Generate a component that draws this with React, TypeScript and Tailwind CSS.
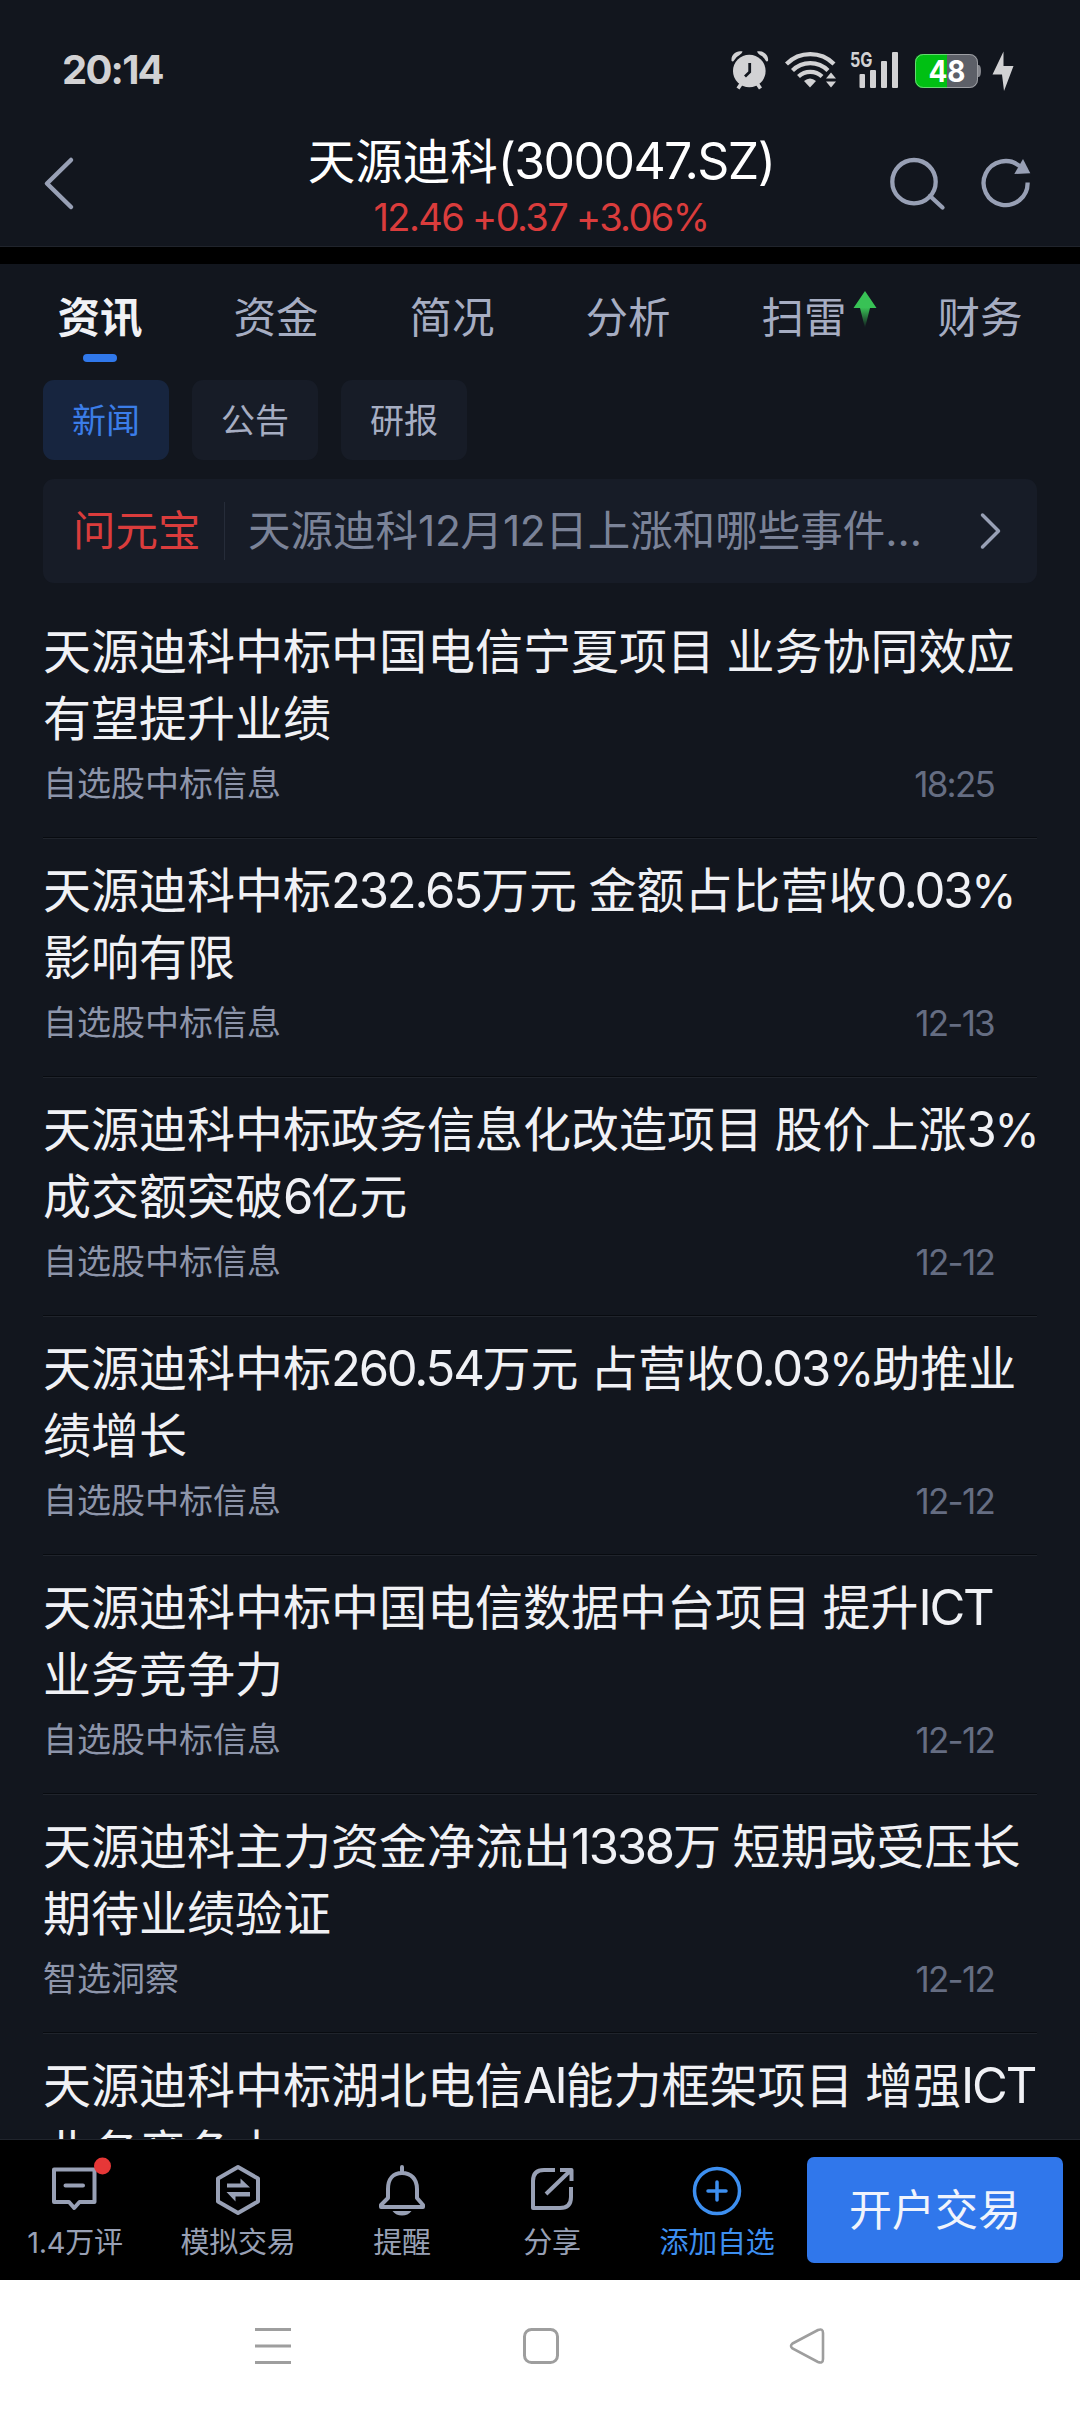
import { clsx } from "clsx";
import type { ReactNode } from "react";

type NewsItem = { lines: [ReactNode, ReactNode]; source?: string; time?: string };

/** Latin runs sit slightly larger than the Han glyphs around them. */
function L({ children }: { children: ReactNode }) {
  return <span className="text-[49px] leading-none tracking-[-0.045em]">{children}</span>;
}

/** Percent sign, set a touch smaller than the digits before it. */
function Pct() {
  return <span className="text-[46px] leading-none tracking-[-0.045em]">%</span>;
}

const NEWS: NewsItem[] = [
  {
    lines: ["天源迪科中标中国电信宁夏项目 业务协同效应", "有望提升业绩"],
    source: "自选股中标信息",
    time: "18:25",
  },
  {
    lines: [<>天源迪科中标<L>232.65</L>万元 金额占比营收<L>0.03</L><Pct /></>, "影响有限"],
    source: "自选股中标信息",
    time: "12-13",
  },
  {
    lines: [<>天源迪科中标政务信息化改造项目 股价上涨<L>3</L><Pct /></>, <>成交额突破<L>6</L>亿元</>],
    source: "自选股中标信息",
    time: "12-12",
  },
  {
    lines: [<>天源迪科中标<L>260.54</L>万元 占营收<L>0.03</L><Pct />助推业</>, "绩增长"],
    source: "自选股中标信息",
    time: "12-12",
  },
  {
    lines: [<>天源迪科中标中国电信数据中台项目 提升<L>ICT</L></>, "业务竞争力"],
    source: "自选股中标信息",
    time: "12-12",
  },
  {
    lines: [<>天源迪科主力资金净流出<L>1338</L>万 短期或受压长</>, "期待业绩验证"],
    source: "智选洞察",
    time: "12-12",
  },
  {
    lines: [<>天源迪科中标湖北电信<L>AI</L>能力框架项目 增强<L>ICT</L></>, "业务竞争力"],
  },
];

const TABS = ["资讯", "资金", "简况", "分析", "扫雷", "财务"];
const CHIPS = ["新闻", "公告", "研报"];

function StatusBar() {
  return (
    <div className="flex h-[140px] items-start justify-between pl-[62px] pr-[66px] pt-[45px] text-[#d2d2d4]">
      <span className="text-[40px] font-bold leading-[49px] tracking-[-0.045em]">20:14</span>
      <svg width="284" height="48" viewBox="730 45 284 48" fill="currentColor">
        {/* alarm */}
        <circle cx="749.3" cy="71" r="16.300" />
        <path d="M731.600 61c-1-6 4.500-11 11-9.400q-.5 2-3 3.400-4 2-5.600 5.500-1 1.500-2.400.5zM768 61c1-6-4.500-11-11-9.400q.5 2 3 3.400 4 2 5.600 5.500 1 1.500 2.400.5z" />
        <path d="M741 84l-3 4.500M757.500 84l3 4.500" stroke="currentColor" strokeWidth="3.600" />
        <path d="M749.700 63v9l-4.700 4.500" fill="none" stroke="#12161e" strokeWidth="2.800" />
        {/* wifi */}
        <g fill="none" stroke="currentColor" strokeWidth="4.200">
          <path d="M786.500 64a33.500 33.500 0 0 1 47.500 0" />
          <path d="M792.500 70.500a25 25 0 0 1 35.500 0" />
          <path d="M798.500 76.500a17 17 0 0 1 23.500 0" />
        </g>
        <path d="M804 81q6-5 12 0l-6 6.500z" />
        <path d="M826 78.500l5-6 5 6zM826 81.500h10l-5 6z" />
        {/* signal */}
        <text x="850" y="67" fontSize="20.500" fontWeight="700" textLength="22.500" lengthAdjust="spacingAndGlyphs">5G</text>
        <rect x="859.500" y="74" width="5.500" height="14" rx="1" />
        <rect x="870" y="70" width="6" height="18" rx="1" />
        <rect x="881" y="61" width="6" height="27" rx="1" />
        <rect x="892" y="52" width="6" height="36" rx="1" />
        {/* battery */}
        <rect x="915" y="54" width="63" height="34" rx="8" fill="#5d6068" />
        <path d="M947 54v34h-24a8 8 0 0 1-8-8V62a8 8 0 0 1 8-8z" fill="#00c013" />
        <rect x="915.500" y="54.500" width="62" height="33" rx="8" fill="none" stroke="#fff" strokeOpacity=".4" />
        <path d="M978 65h1q2 1 2 6t-2 6h-1z" fill="#85878d" />
        <text x="928.500" y="82" fontSize="30" fontWeight="700" fill="#fff" textLength="37" lengthAdjust="spacingAndGlyphs">48</text>
        <path d="M1003.500 51.500L992.500 74.500h9.500l2 16.500 9.500-25h-10z" />
      </svg>
    </div>
  );
}

function Header() {
  return (
    <header className="flex h-[106px] items-start justify-between pl-[43px] pr-[48px]">
      <svg className="mt-[16px]" width="153" height="56" viewBox="43 156 153 56" fill="none" stroke="#98a0b5" strokeWidth="4.500" strokeLinecap="round" strokeLinejoin="round">
        <path d="M71 160L47 183.500 71 207" />
      </svg>
      <div className="-mt-[4px] flex flex-col items-center">
        <h1 className="whitespace-nowrap text-[47.500px] leading-[44px] text-white">
          天源迪科<span className="text-[50px] leading-none tracking-[-0.032em]">(300047.SZ)</span>
        </h1>
        <p className="mt-[12px] whitespace-nowrap text-[38px] leading-[38px] tracking-[-0.043em] text-[#da3c3c]">12.46 +0.37 +3.06%</p>
      </div>
      <svg className="mt-[16px]" width="146" height="56" viewBox="886 156 146 56" fill="none" stroke="#98a0b5" strokeWidth="4.300">
        <circle cx="914" cy="181.700" r="21.700" />
        <path d="M930 196l12.500 11.500" strokeLinecap="round" />
        <path d="M1027.600 182.500A22 22 0 1 1 1019.500 166" />
        <path d="M1023 159l7.300 14.300-16 .7z" fill="#98a0b5" stroke="none" />
      </svg>
    </header>
  );
}

function Tabs() {
  return (
    <nav className="flex h-[116px] px-3">
      {TABS.map((tab, i) => (
        <div key={tab} className="relative flex w-[176px] flex-col items-center pt-[30px]">
          <span className={clsx("text-[42.5px] leading-[48px]", i === 0 ? "font-bold text-[#f0f1f5]" : "text-[#a6adc2]")}>{tab}</span>
          {i === 0 && <span className="mt-[12px] h-2 w-[34px] rounded-full bg-[#3078eb]" />}
          {tab === "扫雷" && (
            <svg className="absolute left-[137px] top-[26px]" width="24" height="38" viewBox="0 0 24 38">
              <defs>
                <linearGradient id="rise" x1="0" y1="0" x2="0" y2="1">
                  <stop offset=".45" stopColor="#38c255" />
                  <stop offset="1" stopColor="#38c255" stopOpacity="0" />
                </linearGradient>
              </defs>
              <path d="M12 1L23.500 18H17l-5 20-5-20H.5z" fill="url(#rise)" />
            </svg>
          )}
        </div>
      ))}
    </nav>
  );
}

function AskBar() {
  return (
    <div className="mx-[43px] mt-[19px] flex h-[104px] items-center rounded-[11px] bg-[#171c27] pl-[30px] pr-[36px] text-[42.5px]">
      <span className="w-[151px] whitespace-nowrap text-[#da3c3c]">问元宝</span>
      <span className="h-[58px] w-px bg-[#262c39]" />
      <span className="ml-[23px] flex-1 whitespace-nowrap text-[#7b8398]">
        天源迪科<span className="tracking-[-0.01em]">12</span>月<span className="tracking-[-0.01em]">12</span>日上涨和哪些事件...
      </span>
      <svg width="22" height="38" viewBox="0 0 22 38" fill="none" stroke="#98a0b5" strokeWidth="3.500" strokeLinecap="round" strokeLinejoin="round">
        <path d="M3.500 3L19.500 19 3.500 35" />
      </svg>
    </div>
  );
}

function NewsRow({ item }: { item: NewsItem }) {
  return (
    <article className="mx-[43px] flex h-[239px] flex-none flex-col border-b border-[#20242c] pt-[18px] shadow-[inset_0_-1px_0_#080b10]">
      <h2 className="whitespace-nowrap text-[48px] leading-[67px] text-[#f0f1f5] [word-spacing:-2px]">
        {item.lines.map((line, i) => (
          <span key={i} className="block h-[67px]">{line}</span>
        ))}
      </h2>
      {item.source && (
        <div className="mt-[8px] flex items-center justify-between pr-[43px] leading-[48px]">
          <span className="text-[34px] text-[#8d95aa]">{item.source}</span>
          <span className="text-[35px] tracking-[-0.05em] text-[#656d82]">{item.time}</span>
        </div>
      )}
    </article>
  );
}

function Action({ label, box, active, children }: { label: string; box: string; active?: boolean; children: ReactNode }) {
  return (
    <div className={clsx("flex flex-col items-center pt-[20px]", box, active ? "text-[#3d8ff0]" : "text-[#98a0b5]")}>
      <svg className="overflow-visible" width="60" height="60" viewBox="-30 -30 60 60" fill="none" stroke="currentColor" strokeWidth="4" strokeLinejoin="round">
        {children}
      </svg>
      <span className="mt-[3px] whitespace-nowrap text-[29px] leading-[40px] tracking-[-0.01em]">{label}</span>
    </div>
  );
}

function BottomBar() {
  return (
    <footer className="flex h-[141px] flex-none border-t border-[#20242c] bg-black">
      <Action label="1.4万评" box="ml-[15px] w-[120px]">
        <path d="M-21-20.500H19.500V12H4.500L-.8 18-6 12H-21zM-9.500-4.500H8" strokeLinecap="round" />
        <circle cx="27.500" cy="-24" r="8.500" fill="#e63737" stroke="none" />
      </Action>
      <Action label="模拟交易" box="ml-[38px] w-[130px]">
        <path d="M0-23L20-11.500V11.500L0 23-20 11.500V-11.500z" />
        <path d="M-11-6.500H2.500V-11.500L12-2.500H-11zM12 6.500H-2.500V11.500L-11.500 2H12z" fill="currentColor" stroke="none" />
      </Action>
      <Action label="提醒" box="ml-[49px] w-[100px]">
        <path d="M0-23V-18M-14-1C-14-11-9-17 0-17S15-11 15-1V8L21 15V17H-21V15L-14 8z" strokeLinecap="round" />
        <path d="M-9.500 21H9.500Q6 25.500 0 25.500T-9.500 21z" fill="currentColor" stroke="none" />
      </Action>
      <Action label="分享" box="ml-[50px] w-[100px]">
        <path d="M3-20H-8Q-19-20-19-9V18H8Q19 18 19 7V-3" />
        <path d="M-6 4L19-20M8-20H19.500V-9" />
      </Action>
      <Action label="添加自选" box="ml-[50px] w-[130px]" active>
        <circle r="22.500" cy="1" strokeWidth="3.500" />
        <path d="M-9 1H9M0-8V10" strokeLinecap="round" strokeWidth="3.500" />
      </Action>
      <button className="ml-[25px] mt-[17px] h-[106px] w-[256px] rounded-[7px] bg-[#3077eb] text-[43px] text-[#f0f4fc]">开户交易</button>
    </footer>
  );
}

function SystemNav() {
  return (
    <div className="flex h-[132px] flex-none items-center bg-white pl-[254px]">
      <svg width="572" height="40" viewBox="254 2326 572 40" fill="none" stroke="#9e9e9e" strokeWidth="3">
        <path d="M255 2329.500h36M255 2346h36M255 2362.500h36" />
        <rect x="524.500" y="2329.500" width="33" height="33" rx="7" />
        <path d="M792.500 2343.500L818 2330q5-2 5 3v26q0 5-5 3l-25.500-13.500q-3-2.500 0-5z" strokeWidth="2.600" />
      </svg>
    </div>
  );
}

export default function App() {
  return (
    <div className="flex h-[2412px] w-[1080px] flex-col overflow-hidden bg-[#12161e] font-[Inter,'Noto_Sans_CJK_SC',sans-serif]">
      <StatusBar />
      <Header />
      <div className="h-[18px] flex-none border-t border-[#20242c] bg-black" />
      <Tabs />
      <div className="flex gap-[23px] px-[43px]">
        {CHIPS.map((chip, i) => (
          <span
            key={chip}
            className={clsx(
              "flex h-20 w-[126px] items-center justify-center rounded-[11px] text-[34px]",
              i === 0 ? "bg-[#17253f] text-[#3b7de8]" : "bg-[#171c27] text-[#a6adc2]"
            )}
          >
            {chip}
          </span>
        ))}
      </div>
      <AskBar />
      <main className="mt-[17px] flex min-h-0 flex-1 flex-col overflow-hidden">
        {NEWS.map((item, i) => (
          <NewsRow key={i} item={item} />
        ))}
      </main>
      <BottomBar />
      <SystemNav />
    </div>
  );
}
